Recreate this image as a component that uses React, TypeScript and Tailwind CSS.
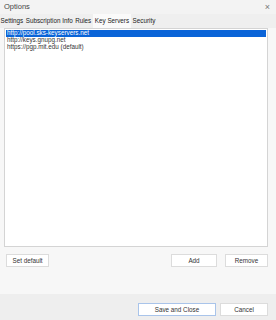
import React, { useState } from 'react';

const tabs = ['Settings', 'Subscription Info', 'Rules', 'Key Servers', 'Security'];
const servers = ['http://pool.sks-keyservers.net', 'http://keys.gnupg.net', 'https://pgp.mit.edu (default)'];

const Btn: React.FC<{ label: string; className?: string }> = ({ label, className = '' }) => (
  <button className={`h-[13px] bg-white border border-[#dcdcdc] text-[6.3px] text-[#333] flex items-center justify-center ${className}`}>
    {label}
  </button>
);

const App: React.FC = () => {
  const [active, setActive] = useState('Key Servers');
  const [selected, setSelected] = useState(0);

  return (
    <div
      className="w-[276px] h-[320px] bg-[#f7f7f7] flex flex-col overflow-hidden text-[#222]"
      style={{ fontFamily: '"Liberation Sans", Arial, sans-serif' }}
    >
      {/* title bar */}
      <div className="h-[14px] bg-[#f3f3f3] flex items-center justify-between pl-[4px] pr-[6px]">
        <span className="text-[7.5px] text-[#444] leading-none">Options</span>
        <span className="text-[9px] text-[#777] leading-none">×</span>
      </div>

      {/* tabs */}
      <div className="h-[14px] bg-[#efefef] flex items-stretch gap-[1.5px] text-[6.3px] leading-none">
        {tabs.map((t) => (
          <button
            key={t}
            onClick={() => setActive(t)}
            className={`px-[0.5px] flex items-center ${active === t ? 'bg-[#fafafa] px-[1.5px]' : ''}`}
          >
            {t}
          </button>
        ))}
      </div>

      <div className="flex-1 flex flex-col pl-[4px] pr-[8px]">
        {/* server list */}
        <div className="h-[219px] bg-white border border-[#d4d4d4] pt-[1px] px-[1px]">
          {servers.map((s, i) => (
            <div
              key={s}
              onClick={() => setSelected(i)}
              className={`h-[7px] flex items-center pl-[1px] text-[6.3px] leading-none ${
                selected === i ? 'bg-[#0a64d8] text-white' : 'text-[#333]'
              }`}
            >
              {s}
            </div>
          ))}
        </div>

        <div className="flex items-center mt-[7px]">
          <Btn label="Set default" className="w-[43px] ml-[2px]" />
          <div className="flex-1" />
          <Btn label="Add" className="w-[46px]" />
          <Btn label="Remove" className="w-[43px] ml-[8px]" />
        </div>
      </div>

      {/* footer */}
      <div className="h-[26px] bg-[#eeeeee] flex items-start justify-end pt-[9px] pr-[8px] gap-[4px]">
        <button className="h-[13px] w-[78px] bg-white border border-[#a9c4ea] text-[6.3px] text-[#333] flex items-center justify-center">
          Save and Close
        </button>
        <Btn label="Cancel" className="w-[48px]" />
      </div>
    </div>
  );
};

export default App;
